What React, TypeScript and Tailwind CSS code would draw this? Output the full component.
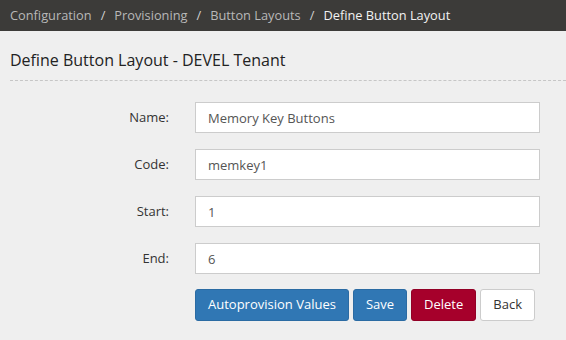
import React from 'react';

const crumbs = ['Configuration', 'Provisioning', 'Button Layouts'];

const fields = [
  { label: 'Name:', value: 'Memory Key Buttons' },
  { label: 'Code:', value: 'memkey1' },
  { label: 'Start:', value: '1' },
  { label: 'End:', value: '6' },
];

export default function App() {
  return (
    <div
      className="w-[566px] h-[340px] overflow-hidden bg-[#efefef] text-[#333]"
      style={{ fontFamily: '"Open Sans", "Liberation Sans", sans-serif' }}
    >
      <nav className="h-[31px] bg-[#3c3b39] flex items-center px-[10px] text-[12.8px]">
        {crumbs.map((c) => (
          <React.Fragment key={c}>
            <span className="text-[#b8b8b8]">{c}</span>
            <span className="text-[#cfcfcf] px-[9px]">/</span>
          </React.Fragment>
        ))}
        <span className="text-[#f2f2f2]">Define Button Layout</span>
      </nav>

      <div className="pl-[10px]">
        <h1 className="mt-[18px] pb-[9px] text-[16px] leading-[22px] text-[#222] border-b border-dashed border-[#c6c6c6]">
          Define Button Layout - DEVEL Tenant
        </h1>

        <form className="mt-[21px] flex flex-col gap-[16px]">
          {fields.map((f) => (
            <div key={f.label} className="flex items-center">
              <label className="w-[159px] text-right text-[13px]">{f.label}</label>
              <input
                readOnly
                value={f.value}
                className="ml-[26px] w-[345px] h-[31px] bg-white border border-[#cccccc] px-[12px] text-[13px] text-[#555] outline-none"
              />
            </div>
          ))}

          <div className="flex gap-[4px] ml-[185px] -mt-[1px] text-[13px]">
            <button type="button" className="h-[32px] px-[12px] rounded-[3px] bg-[#3077b4] border border-[#2b6ba3] text-white">
              Autoprovision Values
            </button>
            <button type="button" className="h-[32px] px-[12px] rounded-[3px] bg-[#3077b4] border border-[#2b6ba3] text-white">
              Save
            </button>
            <button type="button" className="h-[32px] px-[12px] rounded-[3px] bg-[#a6002b] border border-[#920026] text-white">
              Delete
            </button>
            <button type="button" className="h-[32px] px-[12px] rounded-[3px] bg-white border border-[#cccccc] text-[#333]">
              Back
            </button>
          </div>
        </form>
      </div>
    </div>
  );
}
